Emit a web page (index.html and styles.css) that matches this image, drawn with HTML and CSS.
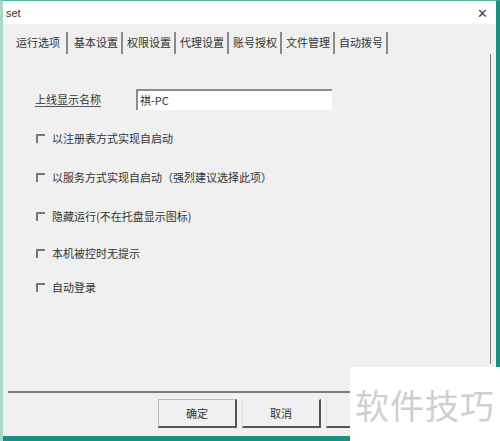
FILE: index.html
```html
<!DOCTYPE html>
<html lang="zh-CN">
<head>
    <meta charset="UTF-8">
    <title>set</title>
    <link rel="stylesheet" href="styles.css">
</head>
<body>
    <div class="window">
        <div class="titlebar">
            <span class="title">set</span>
            <span class="close">&#x2715;</span>
        </div>
        <div class="body">
            <div class="tabs">
                <div class="tab active">运行选项</div>
                <div class="tab">基本设置</div>
                <div class="tab">权限设置</div>
                <div class="tab">代理设置</div>
                <div class="tab">账号授权</div>
                <div class="tab">文件管理</div>
                <div class="tab">自动拨号</div>
            </div>
            <div class="panel">
                <div class="row">
                    <span class="label">上线显示名称</span>
                    <div class="input">祺-PC</div>
                </div>
                <div class="check c1"><span class="box"></span>以注册表方式实现自启动</div>
                <div class="check c2"><span class="box"></span>以服务方式实现自启动（强烈建议选择此项）</div>
                <div class="check c3"><span class="box"></span>隐藏运行(不在托盘显示图标)</div>
                <div class="check c4"><span class="box"></span>本机被控时无提示</div>
                <div class="check"><span class="box"></span>自动登录</div>
            </div>
            <div class="footer">
                <div class="btn">确定</div>
                <div class="btn flat">取消</div>
                <div class="btn flat"></div>
            </div>
        </div>
        <div class="bottombar"></div>
        <div class="watermark">软件技巧</div>
    </div>
</body>
</html>
```

FILE: styles.css
```css
body {
    margin: 0;
    width: 500px;
    height: 441px;
    overflow: hidden;
    font-family: "Noto Sans CJK SC", "Noto Sans", sans-serif;
    font-size: 11px;
    color: #333;
    background: #f0f0f0;
}
.window {
    position: relative;
    width: 500px;
    height: 441px;
    box-sizing: border-box;
    border-left: 3px solid #a8d8cc;
    border-right: 4px solid #1d8f7e;
    border-top: 1px solid #4fb3a0;
    display: flex;
    flex-direction: column;
    background: #f0f0f0;
}
.titlebar {
    height: 23px;
    background: #fff;
    display: flex;
    align-items: center;
    justify-content: space-between;
    padding: 0 8px 0 3px;
}
.title {
    font-family: "Liberation Sans", Arial, sans-serif;
    font-size: 11px;
    color: #333;
}
.close {
    font-size: 13px;
    color: #444;
}
.body {
    flex: 1;
    display: flex;
    flex-direction: column;
}
.tabs {
    display: flex;
    margin: 8px 0 0 10px;
    height: 22px;
}
.tab {
    padding: 0 3px;
    line-height: 20px;
    margin-right: 1px;
    border-right: 2px solid #8a8a8a;
}
.tab.active {
    padding: 0 6px 0 3px;
    margin-right: 3px;
}
.panel {
    height: 310px;
    margin-right: 5px;
    border-right: 1px solid #777;
    padding: 35px 0 0 32px;
    box-sizing: border-box;
}
.row {
    display: flex;
    align-items: center;
    margin-bottom: 19px;
}
.label {
    width: 66px;
    border-bottom: 1px solid #555;
    line-height: 14px;
    margin-right: 35px;
}
.input {
    width: 192px;
    height: 19px;
    background: #fff;
    border-top: 2px solid #8c8c8c;
    border-left: 2px solid #8c8c8c;
    line-height: 19px;
    padding-left: 2px;
}
.check {
    display: flex;
    align-items: center;
    height: 18px;
}
.c1, .c2 {
    margin-bottom: 21px;
}
.c3 {
    margin-bottom: 19px;
}
.c4 {
    margin-bottom: 16px;
}
.box {
    width: 7px;
    height: 7px;
    border-top: 2px solid #777;
    border-left: 2px solid #777;
    margin: 0 7px 0 1px;
}
.footer {
    border-top: 2px solid #7a7a7a;
    margin: 27px 0 0 5px;
    padding: 6px 0 0 150px;
    display: flex;
    gap: 5px;
}
.btn {
    width: 76px;
    height: 26px;
    line-height: 26px;
    text-align: center;
    border: 1px solid #bbb;
    border-right: 2px solid #555;
    border-bottom: 2px solid #555;
    background: #f0f0f0;
}
.btn.flat {
    border-top-color: #f0f0f0;
    border-left: 1px solid #ddd;
}
.bottombar {
    height: 5px;
    margin-top: auto;
    background: #1d8f7e;
}
.watermark {
    position: absolute;
    left: 347px;
    top: 366px;
    width: 150px;
    height: 75px;
    background: #fff;
    color: #cfcfcf;
    font-size: 34px;
    line-height: 75px;
    text-align: center;
    letter-spacing: 1px;
}
```
